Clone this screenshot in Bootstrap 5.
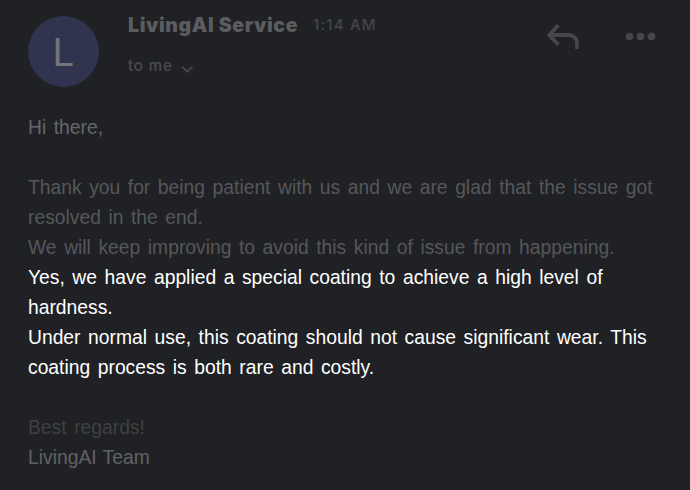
<!DOCTYPE html>
<html lang="en">
<head>
<meta charset="utf-8">
<meta name="viewport" content="width=device-width, initial-scale=1">
<title>LivingAI Service</title>
<link href="https://cdn.jsdelivr.net/npm/bootstrap@5.3.0/dist/css/bootstrap.min.css" rel="stylesheet">
<style>
body{background:#202125;font-family:"Liberation Sans",Arial,sans-serif;height:490px;overflow:hidden}
.mail-head{padding:16px 34px 0 28px;height:113px}
.avatar{width:71px;height:71px;background:#30344f;color:#74757a;font-size:39px;line-height:74px;font-family:Roboto,sans-serif;padding-right:1px}
.meta{margin:-2px 0 0 29px;font-family:Inter,sans-serif;white-space:nowrap}
.sender{font-size:19.5px;font-weight:900;letter-spacing:.6px;line-height:20px;color:#5b5c60}
.sent-at{font-size:15px;font-weight:500;letter-spacing:1.2px;line-height:20px;color:#45464a;margin-left:15px;padding-top:1px}
.to-line{font-size:15px;font-weight:500;letter-spacing:.9px;line-height:20px;color:#4b4c50;margin-top:21px}
.chev{margin:9px 0 0 8px}
.actions{color:#46474b;margin-top:-1px}
.mail-body{padding:0 28px;font-size:19.3px;line-height:30px;word-spacing:2.2px;white-space:nowrap;color:#56575b}
.greet{color:#66676b}
.lit{color:#fff}
.faint{color:#3f4044}
.team{color:#606165;word-spacing:1px}
</style>
<script src="https://cdn.jsdelivr.net/npm/bootstrap@5.3.0/dist/js/bootstrap.bundle.min.js"></script>
</head>
<body>
<header class="mail-head d-flex align-items-start">
  <div class="avatar rounded-circle text-center flex-shrink-0">L</div>
  <div class="meta">
    <div class="d-flex align-items-center"><span class="sender">LivingAI Service</span><span class="sent-at">1:14 AM</span></div>
    <div class="to-line d-flex align-items-start">to me
      <svg class="chev" width="13" height="9" viewBox="0 0 13 9" fill="none" stroke="currentColor" stroke-width="1.7"><path d="M1 1.5l5.3 5.3 5.2-5.3"/></svg>
    </div>
  </div>
  <div class="actions ms-auto d-flex align-items-start">
    <svg width="110" height="40" viewBox="0 0 110 40" fill="none"><path d="M12.300 10.300L3.300 20l9 9.700M3.800 20H23a8 8 0 0 1 8 8v6" stroke="currentColor" stroke-width="3.800"/><g fill="currentColor"><circle cx="83.500" cy="21.500" r="3.800"/><circle cx="94.500" cy="21.500" r="3.800"/><circle cx="105.500" cy="21.500" r="3.800"/></g></svg>
  </div>
</header>
<main class="mail-body">
  <p class="greet mb-0">Hi there,</p>
  <br>
  <p class="mb-0">Thank you for being patient with us and we are glad that the issue got<br>resolved in the end.<br>We will keep improving to avoid this kind of issue from happening.</p>
  <p class="lit mb-0">Yes, we have applied a special coating to achieve a high level of<br>hardness.<br>Under normal use, this coating should not cause significant wear. This<br>coating process is both rare and costly.</p>
  <br>
  <p class="faint mb-0">Best regards!</p>
  <p class="team mb-0">LivingAI Team</p>
</main>
</body>
</html>
